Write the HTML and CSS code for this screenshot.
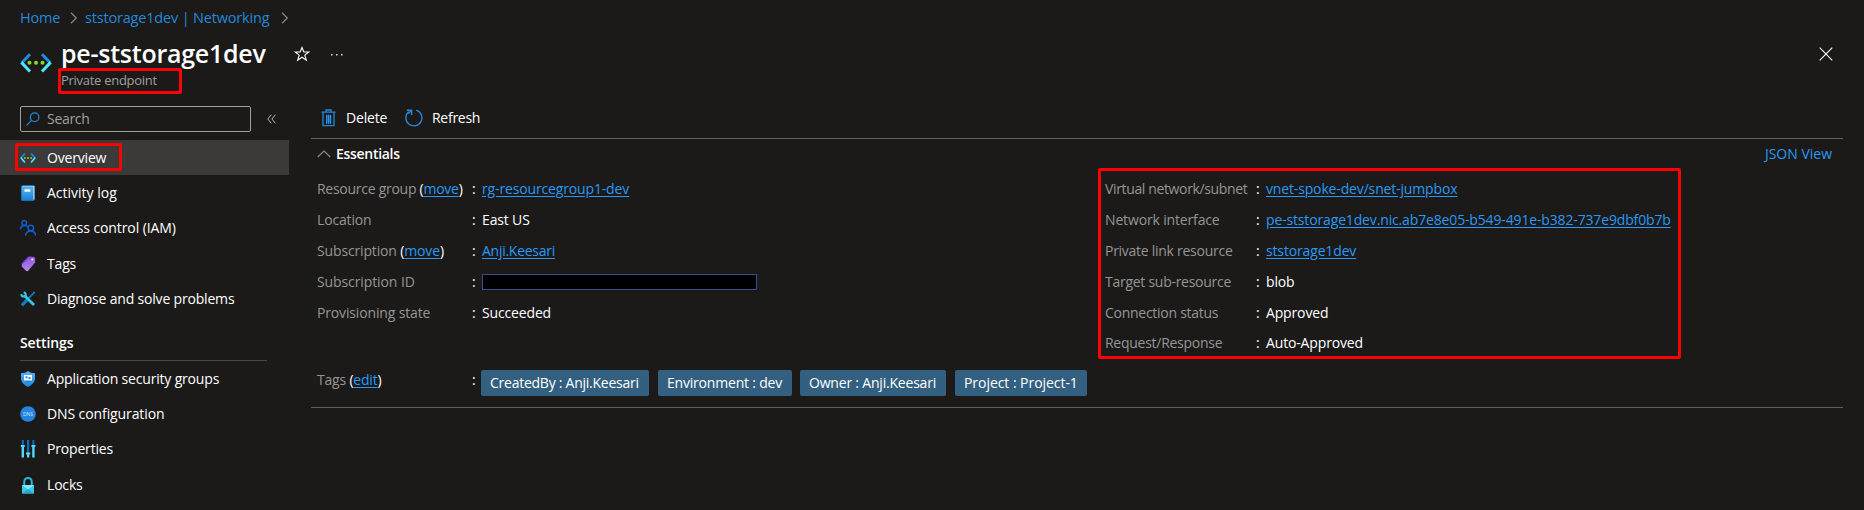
FILE: index.html
```
<!DOCTYPE html>
<html lang="en">
<head>
<meta charset="utf-8">
<title>pe-ststorage1dev</title>
<link rel="stylesheet" href="styles.css">
</head>
<body>
<div class="page">
  <nav class="breadcrumb">
    <a class="crumb-home">Home</a>
    <svg class="crumb-sep" width="8" height="12" viewBox="0 0 8 12"><path d="M1 .8 6.3 6 1 11.2"/></svg>
    <a class="crumb-net">ststorage1dev | Networking</a>
    <svg class="crumb-sep" width="8" height="12" viewBox="0 0 8 12"><path d="M1 .8 6.3 6 1 11.2"/></svg>
  </nav>
  <header class="head">
    <svg class="head-icon" width="32" height="20" viewBox="0 0 32 20">
      <g fill="none" stroke-width="3"><path stroke="#1b8fe0" d="M10 1.3 1.8 9.8M22 1.3l8.2 8.500"/><path stroke="#50e6ff" d="M1.4 9.4 10 18.5M30.6 9.4 22 18.5"/></g>
      <g fill="#86d633"><circle cx="9.5" cy="9.8" r="2"/><circle cx="16" cy="9.8" r="2"/><circle cx="22.5" cy="9.8" r="2"/></g>
    </svg>
    <div class="head-text">
      <h1 class="title">pe-ststorage1dev</h1>
      <div class="subtitle"><span>Private endpoint</span><i class="mark mark-sub"></i></div>
    </div>
    <svg class="star" width="16" height="16" viewBox="0 0 16 16"><path d="M8 1.5 9.8 6h5l-4 3.1 1.5 5L8 11.2 3.7 14.1l1.5-5L1.2 6h5z"/></svg>
    <svg class="dots" width="14" height="4" viewBox="0 0 14 4"><path d="M1 1h1.600v1.600H1zM6 1h1.600v1.600H6zM11 1h1.600v1.600H11z"/></svg>
    <svg class="close" width="14" height="14" viewBox="0 0 14 14"><path d="M.7.7l12.600 12.600M13.300.7.7 13.300"/></svg>
  </header>
  <div class="body">
    <aside class="side">
      <div class="search-row">
        <div class="search">
          <svg width="14" height="14" viewBox="0 0 14 14"><circle cx="8.600" cy="5.200" r="4.300"/><path d="M5.500 8.400.6 13.400"/></svg>
          <span>Search</span>
        </div>
        <svg class="collapse" width="9" height="10" viewBox="0 0 9 10"><path d="M4.300.7.8 5l3.500 4.300M8.400.7 4.900 5l3.500 4.300"/></svg>
      </div>
      <div class="item selected">
        <svg width="16" height="16" viewBox="0 0 16 16"><g fill="none" stroke-width="1.600"><path stroke="#1b8fe0" d="M4.900 3.400.9 8M11.100 3.400l4 4.600"/><path stroke="#50e6ff" d="M.8 7.600l4.100 5M15.200 7.600l-4.100 5"/></g><g fill="#86d633"><circle cx="4.800" cy="8" r="1"/><circle cx="8" cy="8" r="1"/><circle cx="11.200" cy="8" r="1"/></g></svg>
        <span class="snug">Overview</span><i class="mark mark-over"></i>
      </div>
      <div class="item">
        <svg width="16" height="16" viewBox="0 0 16 16"><defs><linearGradient id="bk" x2="0" y2="1"><stop stop-color="#5ab5f2"/><stop offset="1" stop-color="#1683d9"/></linearGradient></defs><rect x="1.500" y=".3" width="13" height="15.400" rx="1" fill="#0d7dd0"/><rect x="3" y=".9" width="11.400" height="13.600" fill="#e8f5ff"/><rect x="1.500" y="1.200" width="12" height="14.300" fill="url(#bk)"/><path fill="#fff" d="M4.500 4.300h5.800v2.400H4.500z"/></svg>
        <span class="even">Activity log</span>
      </div>
      <div class="item">
        <svg width="16" height="16" viewBox="0 0 16 16"><g fill="none" stroke="#0f5fd0" stroke-width="1.500"><circle cx="4.200" cy="2.900" r="2.300"/><circle cx="10.800" cy="8" r="2.800"/><path d="M.6 9.400C.6 6.600 2.600 5.400 4.600 5.400c1.300 0 2.400.4 3 1.200M5.600 15.800c.3-3.300 2.600-4.800 5.200-4.800s4.600 1.500 4.800 4.600"/></g></svg>
        <span class="light">Access control (IAM)</span>
      </div>
      <div class="item low">
        <svg width="16" height="16" viewBox="0 0 16 16"><defs><linearGradient id="tg" x2="0" y2="1"><stop stop-color="#9054dc"/><stop offset="1" stop-color="#b58ae8"/></linearGradient></defs><path fill="#6b35c0" d="M1 7.500 8 .6l4-.5L3.500 11z"/><path fill="url(#tg)" d="M1.800 8.700 9.300 1.300l4.500-.6 1.400 1.200-.1 4.700-7.300 8.700-1.700-.4-4.300-4.400z"/><circle cx="12.300" cy="3.500" r="1" fill="#fff"/></svg>
        <span class="snug">Tags</span>
      </div>
      <div class="item low">
        <svg width="16" height="16" viewBox="0 0 16 16"><path stroke="#1779ba" stroke-width="1.700" d="M14.800.8 8.500 7.300"/><path stroke="#0f7fc4" stroke-width="3.200" d="M7.500 8.500 1.900 14.300"/><path stroke="#35c5ea" stroke-width="2.800" d="M4.200 4.200 14 14"/><path fill="none" stroke="#35c5ea" stroke-width="2" d="M1.300 3.100C1.400 6.400 6.200 6.200 5.800 3.300 5.600 2.200 4.800 1.500 3.700 1.200"/></svg>
        <span class="snug">Diagnose and solve problems</span>
      </div>
      <div class="group">Settings</div>
      <div class="item">
        <svg width="16" height="16" viewBox="0 0 16 16"><defs><linearGradient id="sh" x2="0" y2="1"><stop stop-color="#58b4f5"/><stop offset="1" stop-color="#1988e0"/></linearGradient></defs><path fill="url(#sh)" d="M1 2.200C4 2.200 6 1.500 8 0c2 1.500 4 2.200 7 2.200v5.300c0 4-3.500 6.500-7 8.500-3.500-2-7-4.500-7-8.500z"/><path fill="#fff" d="M4 4h8v5.400H4z"/><path fill="#37a" d="M7 10h2v1.500H7z"/><path fill="#2b8be0" d="M5.500 5.200h2v2h-2zM8.500 6h2v2h-2z"/></svg>
        <span class="snug">Application security groups</span>
      </div>
      <div class="item">
        <svg width="16" height="16" viewBox="0 0 16 16"><circle cx="8" cy="8" r="7.800" fill="#2484df"/><text class="dns-label" x="8" y="9.900" text-anchor="middle">DNS</text></svg>
        <span class="light">DNS configuration</span>
      </div>
      <div class="item">
        <svg width="16" height="18" viewBox="0 0 16 18"><g fill="#0f68c0"><path d="M1.800 0h2v7h-2zM7 0h2.200v13H7zM12.400 0h2v7h-2z"/></g><g fill="#50d8f5"><path d="M1.600 6h2.400v11.500H1.600zM.8 5h4v2h-4zM7 14h2.200v3.500H7zM6 12.500h4.200v2H6zM12.200 6h2.400v11.500h-2.400zM11.400 5h4v2h-4z"/></g></svg>
        <span class="snug">Properties</span>
      </div>
      <div class="item low">
        <svg width="16" height="17" viewBox="0 0 16 17"><path fill="none" stroke="#28b5d8" stroke-width="2" d="M4.300 8V4.600a3.700 3.700 0 0 1 7.400 0V8"/><path fill="#3cc7e6" d="M2 8h12v8.500H2z"/><path fill="#7defff" d="M2 8h12l-6 4.600z"/><path fill="#29a8d0" d="M2 16.500 8 12l6 4.500z"/></svg>
        <span class="snug">Locks</span>
      </div>
    </aside>
    <main class="main">
      <div class="toolbar">
        <svg class="i-del" width="16" height="18" viewBox="0 0 16 18"><g fill="none" stroke="#2386d8" stroke-width="1.300"><path d="M.5 3.200h14M5 3V1h5v2M2 3.500v13.200h11V3.500"/></g><path fill="#1c588c" d="M5 6h5.400v8.500H5z"/><path stroke="#2b96ee" stroke-width="1" d="M5.500 5.800v9M7.500 5.800v9M9.500 5.800v9"/></svg>
        <span class="delete snug">Delete</span>
        <svg class="i-ref" width="18" height="18" viewBox="0 0 18 18"><path fill="none" stroke="#2386d8" stroke-width="1.400" d="M11.200 1.200a8 8 0 1 1-7.400 1.500M1.800 1.200h4.800v4.800M6.300 1.500 3.300 4.500"/></svg>
        <span class="tight">Refresh</span>
      </div>
      <div class="ess-head">
        <svg width="14" height="8" viewBox="0 0 14 8"><path d="M.8 7 7 1l6.200 6"/></svg>
        <b>Essentials</b>
        <a class="json">JSON View</a>
      </div>
      <div class="cols">
        <dl class="props">
          <dt class="tight">Resource group <em>(<a>move</a>)</em></dt><dd><a>rg-resourcegroup1-dev</a></dd>
          <dt>Location</dt><dd>East US</dd>
          <dt>Subscription <em>(<a>move</a>)</em></dt><dd class="tight"><a>Anji.Keesari</a></dd>
          <dt class="light">Subscription ID</dt><dd><span class="redacted"></span></dd>
          <dt>Provisioning state</dt><dd>Succeeded</dd>
        </dl>
        <dl class="props right">
          <dt class="tighter">Virtual network/subnet</dt><dd><a>vnet-spoke-dev/snet-jumpbox</a></dd>
          <dt>Network interface</dt><dd><a>pe-ststorage1dev.nic.ab7e8e05-b549-491e-b382-737e9dbf0b7b</a></dd>
          <dt class="tight">Private link resource</dt><dd><a>ststorage1dev</a></dd>
          <dt class="tight">Target sub-resource</dt><dd>blob</dd>
          <dt class="tight">Connection status</dt><dd>Approved</dd>
          <dt class="tight last">Request/Response</dt><dd class="last">Auto-Approved</dd>
          <i class="mark mark-props"></i>
        </dl>
      </div>
      <div class="tags">
        <div class="tags-label">Tags <em>(<a>edit</a>)</em></div>
        <div class="chips">
          <span class="chip c1">CreatedBy : Anji.Keesari</span>
          <span class="chip c2">Environment : dev</span>
          <span class="chip c3">Owner : Anji.Keesari</span>
          <span class="chip c4">Project : Project-1</span>
        </div>
      </div>
    </main>
  </div>
</div>
</body>
</html>
```
FILE: styles.css
```
* { box-sizing: border-box; }
body { margin: 0; background: #1b1a19; color: #fff; font: 14px/20px "Open Sans", "Noto Sans", sans-serif; overflow: hidden; }
.page { width: 1864px; height: 510px; display: flex; flex-direction: column; white-space: nowrap; }
svg { flex: none; display: block; }
a { color: #2899f5; }
.even { letter-spacing: 0; }
.light { letter-spacing: -.1px; }
.snug { letter-spacing: -.18px; }
.breadcrumb { height: 36px; padding-left: 20px; display: flex; align-items: center; }
.breadcrumb a { flex: none; color: #2488d8; font-size: 14.5px; letter-spacing: -.18px; }
.crumb-home { width: 41px; }
.crumb-net { width: 187px; }
.crumb-sep { margin: 0 7px 0 9px; fill: none; stroke: #8a8886; stroke-width: 1.2; }
.head { height: 64px; padding: 0 31px 0 20px; display: flex; align-items: flex-start; }
.head-icon { margin: 17px 10px 0 0; }
.head-text { width: 233px; margin-left: -1px; }
.title { margin: 0; font-size: 25px; line-height: 34px; font-weight: 600; letter-spacing: -.25px; }
.subtitle { position: relative; font-size: 13px; line-height: 20px; color: #a19f9d; letter-spacing: -.28px; }
.star { margin-top: 10px; fill: none; stroke: #fff; stroke-width: 1.1; }
.dots { margin: 17px 0 0 20px; fill: #d0d0d0; }
.close { margin: 11px 0 0 auto; fill: none; stroke: #fff; stroke-width: 1.1; }
.body { display: flex; flex: 1; }
.side { width: 289px; margin-right: 22px; }
.search-row { height: 40px; padding: 6px 0 0 20px; display: flex; align-items: flex-start; }
.search { width: 231px; height: 26px; border: 1px solid #a19f9d; border-radius: 2px; padding-left: 5px; display: flex; align-items: center; gap: 7px; color: #a19f9d; letter-spacing: -.3px; }
.search span { padding-bottom: 1px; }
.search svg, .collapse, .ess-head svg { fill: none; stroke-width: 1.2; }
.search svg { stroke: #2386d8; }
.collapse { margin: 8px 0 0 16px; stroke: #c8c6c4; stroke-width: .9; }
.item { position: relative; height: 35.2px; padding-left: 20px; display: flex; align-items: center; gap: 11px; }
.low { padding-top: 2px; }
.selected { background: #3b3a39; }
.dns-label { font: 5px "Open Sans", sans-serif; fill: #cfe6fa; }
.group { margin: 10px 22px 0 20px; height: 35px; padding-top: 7px; border-bottom: 1px solid #484644; font-weight: 600; letter-spacing: -.1px; }
.mark { position: absolute; border: 3px solid #f00; border-radius: 2px; }
.mark-sub { left: -3px; top: -2px; width: 124px; height: 26px; }
.mark-over { left: 15px; top: 3px; width: 107px; height: 28px; }
.mark-props { left: -7px; top: -5px; width: 583px; height: 191px; }
.main { width: 1532px; }
.toolbar { height: 39px; padding: 0 0 2px 10px; display: flex; align-items: center; border-bottom: 1px solid #605e5c; }
.i-del { margin-right: 9px; }
.delete { width: 42px; }
.i-ref { margin: 0 9px 0 17px; }
.ess-head { height: 30px; padding: 0 11px 0 6px; display: flex; align-items: center; gap: 5px; }
.ess-head svg { stroke: #8a8886; }
.ess-head b { font-weight: 600; letter-spacing: -.3px; }
.json { margin-left: auto; }
.cols { display: flex; padding: 4px 0 1px 6px; }
.props { flex: none; position: relative; margin: 0; width: 788px; display: grid; grid-template-columns: 155px 1fr; grid-auto-rows: 31px; align-content: start; align-items: center; color: #fff; letter-spacing: -.15px; }
.tight { letter-spacing: -.27px; }
.tighter { letter-spacing: -.36px; }
.props dt { color: #979593; position: relative; }
.props dt::after, .tags-label::after { content: ":"; position: absolute; left: 155px; color: #fff; }
.props dd { margin: 0; padding-left: 10px; }
.props dd a, em a { text-decoration: underline; text-underline-offset: 2px; }
em { font-style: normal; color: #fff; }
.props .last { padding-bottom: 1px; }
.props.right { width: 725px; grid-template-columns: 151px 1fr; }
.right dt::after { left: 151px; }
.redacted { display: block; width: 275px; height: 16px; background: #000; border: 1px solid #2f528f; }
.tags { height: 48px; padding: 10px 0 0 6px; display: flex; border-bottom: 1px solid #605e5c; letter-spacing: -.2px; }
.tags-label { position: relative; width: 164px; color: #979593; }
.chips { display: flex; }
.chip { height: 26px; line-height: 25px; padding-left: 9px; border-radius: 2px; background: #335f80; margin-right: 9px; }
.c1 { width: 168px; letter-spacing: -.25px; } .c2 { width: 134px; margin-right: 8px; } .c3 { width: 146px; } .c4 { width: 132px; letter-spacing: -.05px; }
```
